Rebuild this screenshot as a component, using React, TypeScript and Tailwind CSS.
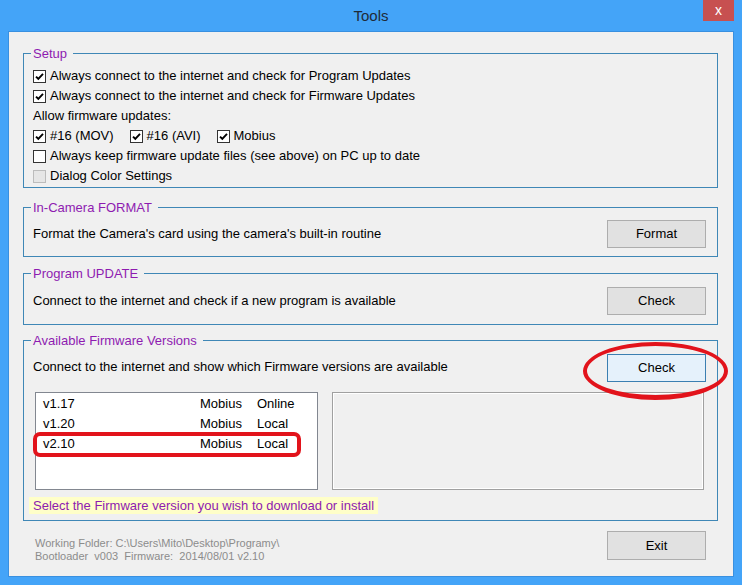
import type { ReactNode } from "react";

const versions = [
  { version: "v1.17", model: "Mobius", source: "Online" },
  { version: "v1.20", model: "Mobius", source: "Local" },
  { version: "v2.10", model: "Mobius", source: "Local" },
];

function CheckBox({ checked = false, disabled = false }: { checked?: boolean; disabled?: boolean }) {
  return (
    <span
      className={
        disabled
          ? "flex h-[13px] w-[13px] shrink-0 border border-[#bcbcbc] bg-[#e6e6e6]"
          : "flex h-[13px] w-[13px] shrink-0 items-center justify-center border border-[#333333] bg-white"
      }
    >
      {checked && (
        <svg width="11" height="11" viewBox="0 0 11 11">
          <path d="M2 5.6 L4.3 7.8 L9 2.8" fill="none" stroke="#000" strokeWidth="1.9" />
        </svg>
      )}
    </span>
  );
}

function Option({ label, checked, disabled }: { label: string; checked?: boolean; disabled?: boolean }) {
  return (
    <label className="flex h-[20px] items-center gap-[4px]">
      <CheckBox checked={checked} disabled={disabled} />
      <span>{label}</span>
    </label>
  );
}

function Group({ title, className, children }: { title: string; className: string; children: ReactNode }) {
  return (
    <fieldset className={"w-[695px] border border-[#3f87b6] pl-[9px] pr-[11px] " + className}>
      <legend className="ml-[-2px] pl-[2px] pr-[6px] text-[13px] leading-[15px] text-[#8e1bb0]">{title}</legend>
      {children}
    </fieldset>
  );
}

function Button({ label, active = false }: { label: string; active?: boolean }) {
  return (
    <button
      type="button"
      className={
        active
          ? "h-[28px] w-[99px] border border-[#3c7fb1] bg-[#e5f1fb] text-[13px] text-black"
          : "h-[28px] w-[99px] border border-[#adadad] bg-[#e1e1e1] text-[13px] text-black"
      }
    >
      {label}
    </button>
  );
}

export default function App() {
  return (
    <div className="relative flex h-[585px] w-[742px] flex-col bg-[#44a4f8] font-['Liberation_Sans',Arial,sans-serif] text-[13px] text-black">
      <div className="flex h-[31px] shrink-0 items-start">
        <div className="w-[39px]" />
        <div className="flex h-[31px] flex-1 items-center justify-center pt-[2px] text-[15px] text-[#1f2b38]">Tools</div>
        <div className="mr-[8px] flex h-[21px] w-[31px] items-center justify-center bg-[#c75050] pb-[1px] text-[14px] leading-none text-white">
          x
        </div>
      </div>

      <div className="mx-[8px] flex h-[546px] flex-col border border-[#3990e0] bg-[#f0f0f0] pl-[14px]">
        <Group title="Setup" className="mt-[14px] pb-[1px]">
          <div className="pt-[5px]">
            <Option label="Always connect to the internet and check for Program Updates" checked />
            <Option label="Always connect to the internet and check for Firmware Updates" checked />
            <div className="flex h-[20px] items-center">Allow firmware updates:</div>
            <div className="flex h-[20px] items-center gap-[16px]">
              <Option label="#16 (MOV)" checked />
              <Option label="#16 (AVI)" checked />
              <Option label="Mobius" checked />
            </div>
            <Option label="Always keep firmware update files (see above) on PC up to date" />
            <Option label="Dialog Color Settings" disabled />
          </div>
        </Group>

        <Group title="In-Camera FORMAT" className="mt-[12px] pb-[8px]">
          <div className="flex items-center justify-between pt-[5px]">
            <span>Format the Camera's card using the camera's built-in routine</span>
            <Button label="Format" />
          </div>
        </Group>

        <Group title="Program UPDATE" className="mt-[9px] pb-[9px]">
          <div className="flex items-center justify-between pt-[6px]">
            <span>Connect to the internet and check if a new program is available</span>
            <Button label="Check" />
          </div>
        </Group>

        <Group title="Available Firmware Versions" className="mt-[8px] pb-[6px]">
          <div className="flex items-center justify-between pt-[6px]">
            <span className="-mt-[2px]">Connect to the internet and show which Firmware versions are available</span>
            <Button label="Check" active />
          </div>
          <div className="mt-[10px] flex gap-[14px] pl-[2px]">
            <div className="h-[98px] w-[283px] border border-[#828790] bg-white pl-[7px] pt-[1px]">
              {versions.map((v) => (
                <div key={v.version} className="flex h-[20px] items-center">
                  <span className="w-[157px]">{v.version}</span>
                  <span className="w-[57px]">{v.model}</span>
                  <span>{v.source}</span>
                </div>
              ))}
            </div>
            <div className="h-[98px] w-[372px] border border-[#a0a0a0] shadow-[inset_1px_1px_0_#fff,inset_-1px_-1px_0_#fff]" />
          </div>
          <div className="mt-[7px] flex">
            <span className="-ml-[4px] flex h-[17px] items-center bg-[#ffffc8] px-[4px] text-[#8e1bb0]">
              Select the Firmware version you wish to download or install
            </span>
          </div>
        </Group>

        <div className="mt-[10px] flex w-[695px] items-start justify-between pr-[12px]">
          <div className="pl-[12px] pt-[6px] text-[11px] leading-[13px] text-[#8c8c8c]">
            <div>Working Folder: C:\Users\Mito\Desktop\Programy\</div>
            <div className="whitespace-pre">Bootloader  v003  Firmware:  2014/08/01 v2.10</div>
          </div>
          <button
            type="button"
            className="h-[29px] w-[99px] border border-[#adadad] bg-[#e1e1e1] text-[13px] text-black"
          >
            Exit
          </button>
        </div>
      </div>

      <div className="absolute left-[583px] top-[342px] h-[58px] w-[145px] rounded-[50%] border-[4px] border-b-[5px] border-[#e2131b]" />
      <div className="absolute left-[33px] top-[432px] h-[25px] w-[268px] rounded-[7px] border-[4px] border-[#e2131b]" />
    </div>
  );
}
